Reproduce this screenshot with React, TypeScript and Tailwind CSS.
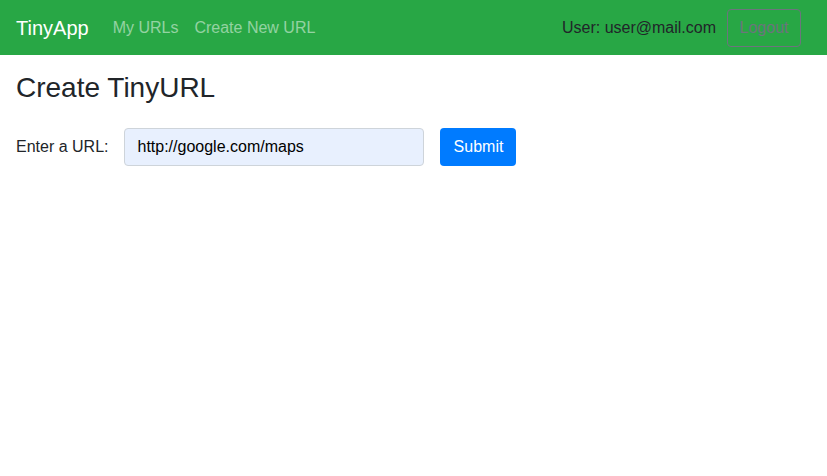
import React from 'react';

const App: React.FC = () => {
  return (
    <div className="min-h-screen bg-white text-[#212529]" style={{ fontFamily: '"Liberation Sans", Arial, sans-serif' }}>
      {/* 상단 네비게이션 */}
      <nav className="h-[55px] bg-[#28a745] flex items-center pl-4 pr-[26px]">
        <span className="text-[20px] text-white mr-4">TinyApp</span>
        <a className="px-2 text-base text-white/50">My URLs</a>
        <a className="px-2 text-base text-white/50">Create New URL</a>
        <div className="ml-auto flex items-center">
          <span className="text-base text-[#212529] mr-[11px]">User: user@mail.com</span>
          <button className="h-[38px] w-[74px] border border-[#6c757d] rounded text-[#6c757d] text-base">
            Logout
          </button>
        </div>
      </nav>

      <main className="px-4">
        <h3 className="mt-4 mb-2 text-[28px] leading-[1.2]">Create TinyURL</h3>
        <form className="mt-[23px] flex items-center" onSubmit={(e) => e.preventDefault()}>
          <label className="text-base mr-4">Enter a URL:</label>
          <input
            type="text"
            defaultValue="http://google.com/maps"
            className="w-[300px] h-[38px] px-3 border border-[#ced4da] rounded bg-[#e8f0fe] text-base text-black outline-none mr-4"
          />
          <button type="submit" className="h-[38px] w-[76px] rounded bg-[#007bff] text-white text-base">
            Submit
          </button>
        </form>
      </main>
    </div>
  );
};

export default App;
